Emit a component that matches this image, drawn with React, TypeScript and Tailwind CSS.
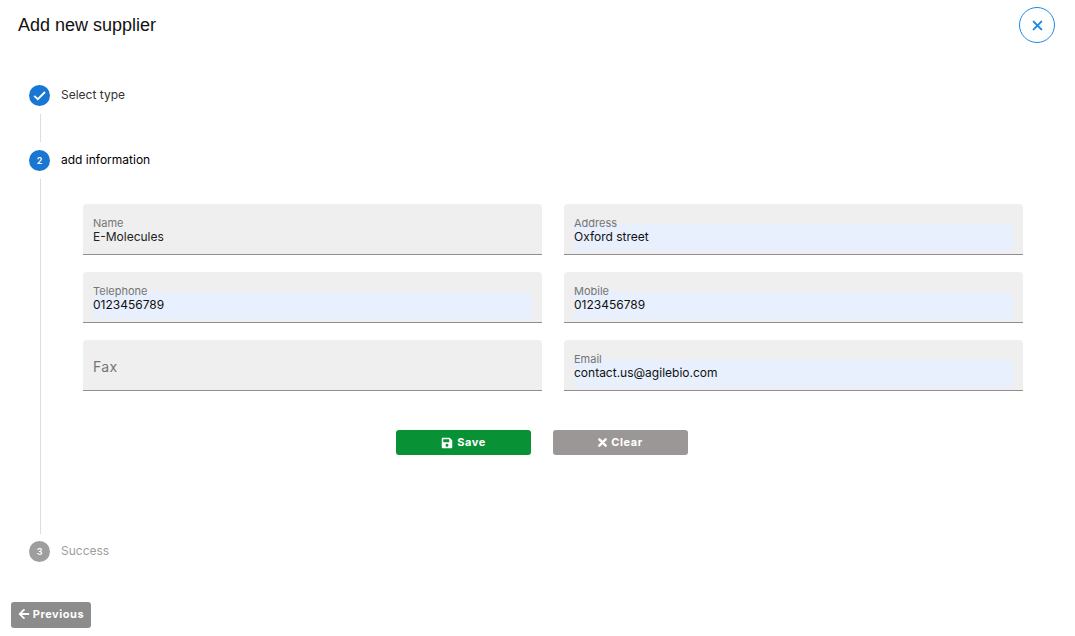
import { useState } from "react";
import { FaArrowLeft, FaSave } from "react-icons/fa";

type Field = {
  id: string;
  label: string;
  type: string;
  value: string;
  filled?: boolean;
};

const fields: Field[] = [
  { id: "name", label: "Name", type: "text", value: "E-Molecules" },
  { id: "address", label: "Address", type: "text", value: "Oxford street", filled: true },
  { id: "telephone", label: "Telephone", type: "tel", value: "0123456789", filled: true },
  { id: "mobile", label: "Mobile", type: "tel", value: "0123456789", filled: true },
  { id: "fax", label: "Fax", type: "tel", value: "" },
  { id: "email", label: "Email", type: "email", value: "contact.us@agilebio.com", filled: true },
];

function TextField({ id, label, type, value, filled }: Field) {
  const [text, setText] = useState(value);

  return (
    <div className="relative h-[51px] rounded-t border-b border-[#8f8f8f] bg-[#efefef] px-[10px] pt-5">
      <input
        id={id}
        type={type}
        value={text}
        onChange={(e) => setText(e.target.value)}
        className={`block h-[27px] w-full rounded-xs pb-0.5 text-xs outline-none ${
          filled ? "bg-[#e8effd] text-[#111111]" : "text-[#222222]"
        }`}
      />
      <label
        htmlFor={id}
        className={`pointer-events-none absolute left-[10px] text-[#757575] ${
          text ? "top-3 text-[11px] leading-[14px]" : "top-[17px] text-sm leading-5 tracking-wide"
        }`}
      >
        {label}
      </label>
    </div>
  );
}

function CheckMark() {
  return (
    <svg width="13" height="13" viewBox="0 0 13 13" fill="none" stroke="currentColor" strokeWidth="1.8">
      <path d="M1.2 6.8 4.8 10.2 12 3" />
    </svg>
  );
}

function CloseMark({ size, weight }: { size: number; weight: number }) {
  return (
    <svg
      width={size}
      height={size}
      viewBox="0 0 10 10"
      fill="none"
      stroke="currentColor"
      strokeWidth={weight}
      strokeLinecap="round"
    >
      <path d="M1.5 1.5 8.5 8.5M8.5 1.5 1.5 8.5" />
    </svg>
  );
}

function Step({
  label,
  marker,
  state,
}: {
  label: string;
  marker: React.ReactNode;
  state: "done" | "active" | "todo";
}) {
  const text = {
    done: "text-[#333333]",
    active: "text-black",
    todo: "text-[#9e9e9e]",
  };

  return (
    <div className="flex h-[21px] gap-[11px]">
      <span
        className={`flex size-[21px] items-center justify-center rounded-full text-[9px] font-semibold text-white ${
          state === "todo" ? "bg-[#9e9e9e]" : "bg-[#1976d2]"
        }`}
      >
        {marker}
      </span>
      <span className={`text-xs leading-5 ${text[state]}`}>{label}</span>
    </div>
  );
}

export default function App() {
  return (
    <div className="bg-white pb-2 font-['Inter',sans-serif]">
      <header className="flex items-center justify-between pt-[7px] pr-5 pl-[18px]">
        <h1 className="font-['Liberation_Sans',sans-serif] text-lg text-[#111111]">Add new supplier</h1>
        <button
          type="button"
          aria-label="Close"
          className="flex size-9 items-center justify-center rounded-full border border-[#1e88e5] text-[#1e88e5]"
        >
          <CloseMark size={11} weight={1.8} />
        </button>
      </header>

      <main className="pt-[42px] pl-[29px]">
        <Step label="Select type" state="done" marker={<CheckMark />} />
        <div className="my-2 ml-[11px] h-7 border-l border-[#dddddd]" />

        <Step label="add information" state="active" marker="2" />
        <form
          className="mt-2 mb-[7px] ml-[11px] border-l border-[#dddddd] pt-[25px] pb-[79px]"
          onSubmit={(e) => e.preventDefault()}
        >
          <div className="grid grid-cols-2 gap-x-[22px] gap-y-[17px] pr-[52px] pl-[42px]">
            {fields.map((f) => (
              <TextField key={f.id} {...f} />
            ))}
          </div>
          <div className="mt-[39px] flex justify-center gap-[22px] pr-8 text-[11px] font-bold tracking-wider text-white">
            <button
              type="submit"
              className="flex h-[25px] w-[135px] items-center justify-center gap-1 rounded-[3px] bg-[#089235]"
            >
              <FaSave size={12} />
              Save
            </button>
            <button
              type="reset"
              className="flex h-[25px] w-[135px] items-center justify-center gap-1 rounded-[3px] bg-[#9c9797]"
            >
              <CloseMark size={9} weight={2.6} />
              Clear
            </button>
          </div>
        </form>

        <Step label="Success" state="todo" marker="3" />
      </main>

      <button
        type="button"
        className="mt-10 ml-[11px] flex h-[26px] w-20 items-center justify-center gap-[3px] rounded-[3px] bg-[#8c8c8c] pb-0.5 text-[11px] font-bold tracking-wider text-white"
      >
        <FaArrowLeft size={12} />
        Previous
      </button>
    </div>
  );
}
